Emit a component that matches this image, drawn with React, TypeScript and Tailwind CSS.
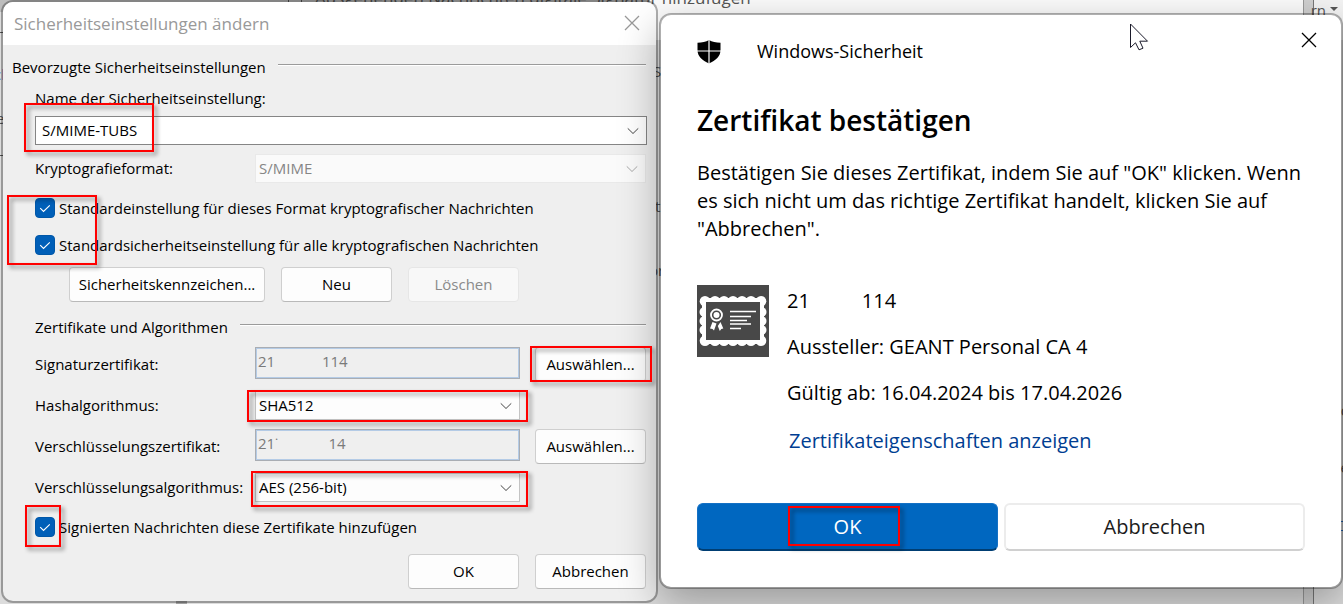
import type { ReactNode } from "react";
import { clsx } from "clsx";

const fieldText = "text-[15px] leading-5";

const scallops = {
  xs: [8, 18, 27, 36, 45, 54, 64],
  ys: [27, 36, 45],
};

function Highlight({ className }: { className: string }) {
  return (
    <span
      aria-hidden="true"
      className={clsx(
        "pointer-events-none absolute z-10 border-2 border-[#f00] drop-shadow-[3px_3px_2px_rgba(0,0,0,0.45)]",
        className
      )}
    />
  );
}

function CloseIcon() {
  return (
    <svg viewBox="0 0 16 16" className="size-4" fill="none" stroke="currentColor" strokeWidth="1.3">
      <path d="M1 1l14 14M15 1L1 15" />
    </svg>
  );
}

function Chevron() {
  return (
    <svg
      viewBox="0 0 12 7"
      className="pointer-events-none absolute top-1/2 right-2 h-[7px] w-3 -translate-y-1/2"
      fill="none"
      stroke="currentColor"
      strokeWidth="1"
    >
      <path d="M0.7 0.8L6 6l5.3-5.2" />
    </svg>
  );
}

function Combo({
  id,
  value,
  className,
  disabled = false,
}: {
  id: string;
  value: string;
  className: string;
  disabled?: boolean;
}) {
  return (
    <div className={clsx("relative h-[29px] min-w-0 flex-1", disabled ? "text-[#a8a8a8]" : "text-[#444]")}>
      <select
        id={id}
        disabled={disabled}
        className={clsx(
          "h-full w-full appearance-none border pb-0.5 outline-none",
          fieldText,
          disabled ? "text-[#868686] opacity-100" : "text-black",
          className
        )}
      >
        <option>{value}</option>
      </select>
      <Chevron />
    </div>
  );
}

function Button({ children, className, disabled = false }: { children: ReactNode; className?: string; disabled?: boolean }) {
  return (
    <button
      type="button"
      disabled={disabled}
      className={clsx(
        "block h-[35px] shrink-0 rounded border pb-0.5 text-center whitespace-nowrap",
        fieldText,
        disabled ? "border-[#e6e6e6] bg-[#f8f8f8] text-[#8a8a8a]" : "border-[#cfcfcf] border-b-[#b9b9b9] bg-[#fdfdfd]",
        className ?? "w-[111px]"
      )}
    >
      {children}
    </button>
  );
}

function Check({ id, label, className }: { id: string; label: string; className?: string }) {
  return (
    <div className={clsx("relative flex h-5 items-center pl-8", className)}>
      <span className="relative size-5 shrink-0">
        <input
          id={id}
          type="checkbox"
          defaultChecked
          className="block size-5 appearance-none rounded border border-[#0057a8] bg-[#005fb8]"
        />
        <svg
          viewBox="0 0 20 20"
          className="pointer-events-none absolute inset-0 size-5"
          fill="none"
          stroke="white"
          strokeWidth="1.1"
        >
          <path d="M5.2 10.2l3.3 3.3L14.8 7.3" />
        </svg>
      </span>
      <label htmlFor={id} className={clsx("pl-1 whitespace-nowrap", fieldText)}>
        {label}
      </label>
    </div>
  );
}

function GroupTitle({ children, className }: { children: ReactNode; className: string }) {
  return (
    <div className={clsx("flex h-[22px] items-center pr-2.5", className)}>
      <h2 className={clsx("whitespace-nowrap", fieldText)}>{children}</h2>
      <span className="mb-1 ml-3 h-0.5 flex-1 border-t border-b border-t-[#9b9b9b] border-b-white" />
    </div>
  );
}

function Row({ htmlFor, label, className, children }: { htmlFor: string; label: string; className?: string; children: ReactNode }) {
  return (
    <div className={clsx("flex h-[35px] items-center pr-2.5 pl-8", className)}>
      <label htmlFor={htmlFor} className={clsx("w-[220px] shrink-0 pb-0.5 whitespace-nowrap", fieldText)}>
        {label}
      </label>
      {children}
    </div>
  );
}

function CertField({ id, value }: { id: string; value: string }) {
  return (
    <input
      id={id}
      readOnly
      defaultValue={value}
      className={clsx(
        "h-8 min-w-0 flex-1 self-start border border-[#a9adb3] bg-[#efefef] px-0.5 pb-1 text-[#7a7a7a] outline-none ring-1 ring-[#b4cbe6] ring-inset",
        fieldText
      )}
    />
  );
}

function SettingsDialog() {
  return (
    <section
      aria-label="Sicherheitseinstellungen ändern"
      className="relative overflow-hidden rounded-xl border-2 border-black/30 bg-[#efefef] bg-clip-padding"
    >
      <header className="flex h-[43px] items-center justify-between bg-white pr-4 pl-[11px] text-[#999]">
        <h1 className="text-[17px] leading-6 whitespace-nowrap">Sicherheitseinstellungen ändern</h1>
        <button type="button" aria-label="Schließen" className="mb-0.5">
          <CloseIcon />
        </button>
      </header>

      <GroupTitle className="mt-[11px] pl-[9px]">Bevorzugte Sicherheitseinstellungen</GroupTitle>
      <div className="relative mt-2.5 pr-[9px] pl-8">
        <label htmlFor="name" className={clsx("block h-[22px]", fieldText)}>
          Name der Sicherheitseinstellung:
        </label>
        <div className="mt-1.5 flex">
          <Combo id="name" value="S/MIME-TUBS" className="border-[#858585] bg-white px-1.5" />
        </div>
        <Highlight className="top-[15px] left-[21px] h-[49px] w-[130px]" />
      </div>

      <Row htmlFor="format" label="Kryptografieformat:" className="mt-1.5">
        <Combo id="format" value="S/MIME" disabled className="border-[#e9e9e9] bg-[#fafafa] px-[3px]" />
      </Row>

      <div className="relative mt-3">
        <Check id="standard" label="Standardeinstellung für dieses Format kryptografischer Nachrichten" />
        <Check
          id="standard-all"
          label="Standardsicherheitseinstellung für alle kryptografischen Nachrichten"
          className="mt-[17px]"
        />
        <Highlight className="-top-[3px] left-1 h-[70px] w-[90px]" />
      </div>

      <div className="mt-3 flex gap-4 pl-[66px]">
        <Button className="w-[196px]">Sicherheitskennzeichen...</Button>
        <Button>Neu</Button>
        <Button disabled>Löschen</Button>
      </div>

      <GroupTitle className="mt-3.5 pl-8">Zertifikate und Algorithmen</GroupTitle>
      <div className="mt-[9px] space-y-1.5">
        <Row htmlFor="sign-cert" label="Signaturzertifikat:">
          <CertField id="sign-cert" value={"21" + "\u00a0".repeat(12) + "114"} />
          <span className="relative ml-[15px]">
            <Button>Auswählen...</Button>
            <Highlight className="-top-px -left-[5px] h-9 w-[122px]" />
          </span>
        </Row>
        <Row htmlFor="hash" label="Hashalgorithmus:">
          <div className="relative flex min-w-0 flex-1">
            <Combo id="hash" value="SHA512" className="border-[#c4c4c4] bg-[#fdfdfd] px-[3px]" />
            <Highlight className="-top-px -left-2 h-8 w-[calc(100%+16px)]" />
          </div>
          <span className="w-[126px]" />
        </Row>
        <Row htmlFor="enc-cert" label="Verschlüsselungszertifikat:">
          <CertField id="enc-cert" value={"21˙" + "\u00a0".repeat(13) + "14"} />
          <span className="ml-[15px]">
            <Button>Auswählen...</Button>
          </span>
        </Row>
        <Row htmlFor="enc" label="Verschlüsselungsalgorithmus:">
          <div className="relative flex min-w-0 flex-1">
            <Combo id="enc" value="AES (256-bit)" className="border-[#c4c4c4] bg-[#fdfdfd] px-[3px]" />
            <Highlight className="-top-0.5 -left-1 h-9 w-[calc(100%+12px)]" />
          </div>
          <span className="w-[126px]" />
        </Row>
      </div>

      <div className="relative mt-3">
        <Check id="attach" label="Signierten Nachrichten diese Zertifikate hinzufügen" />
        <Highlight className="-top-3 left-[22px] h-[42px] w-9" />
      </div>
      <footer className="mt-[17px] mb-3 flex justify-end gap-4 pr-2.5">
        <Button>OK</Button>
        <Button>Abbrechen</Button>
      </footer>
    </section>
  );
}

function ShieldIcon() {
  return (
    <svg viewBox="0 0 24 24" className="size-6">
      <path d="M12 0C9 1.8 5 2.6 0.5 2.7V10c0 6.4 4.700 10.500 11.500 13.500 6.800-3 11.500-7.100 11.500-13.500V2.700C19 2.600 15 1.800 12 0z" />
      <path d="M12 0v24M0 11h24" stroke="white" strokeWidth="1.2" />
    </svg>
  );
}

function CertificateIcon() {
  return (
    <svg viewBox="0 0 72 72" className="size-[72px] shrink-0">
      <rect width="72" height="72" fill="#484848" />
      <g fill="white">
        <rect x="5" y="13" width="62" height="46" />
        {scallops.xs.map((x) => (
          <g key={x}>
            <circle cx={x} cy="16.3" r="5.3" />
            <circle cx={x} cy="55.7" r="5.3" />
          </g>
        ))}
        {scallops.ys.map((y) => (
          <g key={y}>
            <circle cx="7.5" cy={y} r="5" />
            <circle cx="64.5" cy={y} r="5" />
          </g>
        ))}
      </g>
      <rect x="9" y="17" width="54" height="38" fill="#484848" />
      <circle cx="19.5" cy="30" r="5.5" fill="none" stroke="white" strokeWidth="1.8" />
      <circle cx="19.5" cy="30" r="3" fill="white" />
      <path d="M15.5 37l4 1.5-2.5 7-1.5-1.5-2.5-.5zM23.5 37l2.8 6.5-2 .5-1.5 2-2-5z" fill="white" />
      <path d="M33 26.5h26M33 31.5h21M33 35.5h17M33 39h21M33 43.5h11" stroke="white" strokeWidth="1.3" />
    </svg>
  );
}

function CertificateDialog() {
  return (
    <section
      aria-label="Windows-Sicherheit"
      className="relative mt-[13px] mb-[15px] flex flex-col rounded-xl border-2 border-black/30 bg-white bg-clip-padding px-9 shadow-[0_14px_40px_rgba(0,0,0,0.3)]"
    >
      <header className="flex h-[73px] items-center">
        <ShieldIcon />
        <span className="mb-0.5 ml-9 text-[18px] leading-6">Windows-Sicherheit</span>
        <button type="button" aria-label="Schließen" className="-mr-3 mb-6 ml-auto">
          <CloseIcon />
        </button>
      </header>
      <h1 className="mt-3.5 text-[28px] leading-9 font-semibold whitespace-nowrap">Zertifikat bestätigen</h1>
      <p className="mt-[21px] text-[20px] leading-7 whitespace-nowrap">
        Bestätigen Sie dieses Zertifikat, indem Sie auf "OK" klicken. Wenn
        <br />
        es sich nicht um das richtige Zertifikat handelt, klicken Sie auf
        <br />
        "Abbrechen".
      </p>
      <div className="mt-[42px] flex gap-[18px]">
        <CertificateIcon />
        <div className="flex flex-col gap-[18px] pt-0.5 text-[20px] leading-7 whitespace-nowrap">
          <p className="whitespace-pre">{"21" + " ".repeat(10) + "114"}</p>
          <p>Aussteller: GEANT Personal CA 4</p>
          <p>Gültig ab: 16.04.2024 bis 17.04.2026</p>
          <a href="#" className="mt-0.5 ml-0.5 text-[#003e92]">
            Zertifikateigenschaften anzeigen
          </a>
        </div>
      </div>
      <footer className="mt-12 mb-9 grid grid-cols-2 gap-1.5 text-[20px] leading-7">
        <button type="button" className="relative h-12 rounded-md border border-[#1470c4] border-b-2 border-b-[#003e73] bg-[#0067c0] text-white">
          OK
          <Highlight className="top-0.5 left-[30%] h-10 w-28" />
        </button>
        <button type="button" className="h-12 rounded-md border-2 border-[#ececec] border-b-[#d0d0d0] bg-white text-[#1b1b1b]">
          Abbrechen
        </button>
      </footer>

      <svg viewBox="0 0 20 28" className="absolute top-2 left-[468px] h-7 w-5" fill="white" stroke="#1a1a2a" strokeWidth="1">
        <path d="M1.5 1v23.5l5-4.7 3.500 7 4-1.600-3.200-7h7.700z" />
      </svg>
    </section>
  );
}

/* Parts of the window underneath that stay visible around the dialogs */
function Backdrop() {
  return (
    <div aria-hidden="true" className="absolute inset-0 overflow-hidden bg-[#dcdcdc] text-[15px] leading-5 whitespace-nowrap text-[#555]">
      <div className="absolute top-0 left-0 h-3 w-[650px] bg-[#bdbdbd]" />
      <div className="absolute top-0 right-10 left-[650px] h-10 bg-[#fbfbfb]" />
      <div className="absolute top-0 right-0 h-10 w-[30px] bg-[#f3f3f3]" />
      <div className="absolute top-0 right-[29px] bottom-0 w-[11px] border-r border-l border-r-[#777] border-l-[#999] bg-[#d0d0d0]" />
      <div className="absolute bottom-0 left-44 h-4 w-[11px] bg-[#a0a0a0]" />
      <span className="absolute top-[-7px] left-72 size-[14px] border border-[#555]" />
      <span className="absolute top-[-12px] left-[315px] text-[17px]">Ausgehenden Nachrichten digitale Signatur hinzufügen</span>
      <span className="absolute top-0 right-[17px]">rn</span>
      <span className="absolute top-[7px] right-[5px] h-1 w-2 bg-[#555] [clip-path:polygon(0_0,100%_0,50%_100%)]" />
      <span className="absolute top-16 left-[-6px] text-[#5a6bb5]">ch</span>
      <span className="absolute top-[108px] left-[-4px]">e</span>
      <span className="absolute top-8 left-0 h-px w-1 bg-[#555]" />
      <span className="absolute top-[155px] left-0 h-px w-1 bg-[#555]" />
      <span className="absolute top-[61px] left-[653px]">S</span>
      <span className="absolute top-[196px] left-[655px]">t</span>
      <span className="absolute top-[260px] left-[649px]">or</span>
      <span className="absolute top-[400px] right-[-7px]">d</span>
      <span className="absolute top-[457px] right-[-6px]">e</span>
      <span className="absolute top-[521px] right-0 h-2.5 w-0.5 border-t border-b border-[#2a6fc0]" />
    </div>
  );
}

export default function App() {
  return (
    <main className="relative overflow-hidden font-['Open_Sans','Noto_Sans',sans-serif] text-black">
      <Backdrop />
      <div className="grid min-h-screen grid-cols-[657fr_684fr] items-start gap-px pl-px">
        <SettingsDialog />
        <CertificateDialog />
      </div>
    </main>
  );
}
